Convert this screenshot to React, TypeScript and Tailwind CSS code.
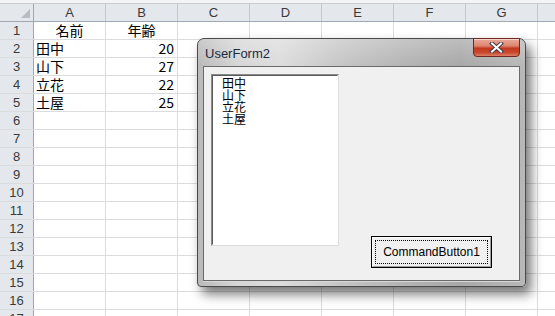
import React from "react";

const COLS = ["A", "B", "C", "D", "E", "F", "G", "H"];
const DATA: Record<number, { a?: string; b?: string; center?: boolean }> = {
  1: { a: "名前", b: "年齢", center: true },
  2: { a: "田中", b: "20" },
  3: { a: "山下", b: "27" },
  4: { a: "立花", b: "22" },
  5: { a: "土屋", b: "25" },
};
const ROWS = Array.from({ length: 17 }, (_, i) => i + 1);
const LIST = ["田中", "山下", "立花", "土屋"];

function HeaderRow() {
  return (
    <div className="flex h-[18px] w-max border-b border-[#9ea7b2] bg-[#e4e7ec]">
      <div className="relative w-[34px] shrink-0 border-r border-[#9ea7b2]">
        <div className="absolute bottom-[3px] right-[3px] h-0 w-0 border-b-[9px] border-l-[9px] border-b-[#b7bcc2] border-l-transparent" />
      </div>
      {COLS.map((c) => (
        <div
          key={c}
          className="flex w-[72px] shrink-0 items-center justify-center border-r border-[#c3c8cf] text-[13px] leading-none text-[#3a3a3a] font-['Liberation_Sans',sans-serif]"
        >
          {c}
        </div>
      ))}
    </div>
  );
}

function Row({ n }: { n: number }) {
  const d = DATA[n];
  return (
    <div className="flex h-[18px] w-max border-b border-[#dadcdd]">
      <div className="flex w-[34px] shrink-0 items-center justify-center border-r border-[#9ea7b2] bg-[#e4e7ec] text-[13px] leading-none text-[#3a3a3a] font-['Liberation_Sans',sans-serif]">
        {n}
      </div>
      {COLS.map((c) => {
        let content: React.ReactNode = null;
        let align = "justify-start pl-[2px]";
        if (d && c === "A") {
          content = d.a;
          align = d.center ? "justify-center" : "justify-start pl-[2px]";
        } else if (d && c === "B") {
          content = d.b;
          align = d.center ? "justify-center" : "justify-end pr-[3px]";
        }
        return (
          <div
            key={c}
            className={`flex w-[72px] shrink-0 items-end border-r border-[#dadcdd] pb-[1px] text-[14px] leading-[15px] text-black font-['Noto_Sans_CJK_JP',sans-serif] ${align}`}
          >
            {content}
          </div>
        );
      })}
    </div>
  );
}

function CloseButton() {
  return (
    <div className="mt-[-1px] flex h-[19px] w-[47px] shrink-0 items-center justify-center rounded-b-[4px] border border-[#6e2a1f] bg-[linear-gradient(to_bottom,#e9aa9a_0%,#dd8571_40%,#c2381f_55%,#c94a31_80%,#dc7e64_100%)] shadow-[inset_0_1px_0_rgba(255,255,255,0.5)]">
      <svg width="15" height="11" viewBox="0 0 15 11">
        <path d="M3 1.5 L12 9.5 M12 1.5 L3 9.5" stroke="#3c3c46" strokeWidth="4" strokeLinecap="square" />
        <path d="M3 1.5 L12 9.5 M12 1.5 L3 9.5" stroke="#ffffff" strokeWidth="2" strokeLinecap="square" />
      </svg>
    </div>
  );
}

function UserForm() {
  return (
    <div className="absolute left-[197px] top-[38px] flex h-[249px] w-[329px] flex-col rounded-t-[7px] rounded-b-[4px] border border-[#4a4a4a] bg-[linear-gradient(to_right,#b9b9b9_0%,#d6d6d6_12%,#dcdcdc_25%,#c4c4c4_45%,#b2b2b2_65%,#a8a8a8_80%,#b8b8b8_100%)] shadow-[5px_7px_12px_rgba(0,0,0,0.55)]">
      <div className="flex h-[27px] shrink-0 justify-between rounded-t-[6px] bg-[linear-gradient(to_bottom,rgba(255,255,255,0.25),rgba(255,255,255,0))] pr-[5px]">
        <div className="flex items-center pl-[7px] pt-[1px] text-[13px] leading-none text-[#1c2b40] font-['Liberation_Sans',sans-serif]">
          UserForm2
        </div>
        <CloseButton />
      </div>
      <div className="mx-[5px] mb-[5px] flex flex-1 items-start border border-[#6a6a6a] bg-[#f0f0f0] p-[7px] shadow-[0_1px_0_#d8d8d8]">
        <div className="h-[172px] w-[128px] shrink-0 border border-[#dcdcdc] border-l-[#8a8a8a] border-t-[#8a8a8a] bg-white">
          <div className="h-full w-full border border-transparent border-l-[#5a5a5a] border-t-[#5a5a5a] pl-[9px] pt-[1px]">
            {LIST.map((t) => (
              <div key={t} className="h-[12px] text-[12px] leading-[12px] text-black font-['Noto_Sans_CJK_JP',sans-serif]">
                {t}
              </div>
            ))}
          </div>
        </div>
        <div className="ml-[32px] mt-auto mb-[5px] h-[32px] w-[121px] shrink-0 border border-black bg-[#f0f0f0]">
          <div className="h-full w-full border border-white border-b-[#a0a0a0] border-r-[#a0a0a0] p-[2px]">
            <div className="flex h-full w-full items-center justify-center border border-dotted border-black text-[12px] leading-none text-black font-['Liberation_Sans',sans-serif]">
              CommandButton1
            </div>
          </div>
        </div>
      </div>
    </div>
  );
}

export default function App() {
  return (
    <div className="relative h-[316px] w-[555px] overflow-hidden bg-white">
      <div className="h-[4px] border-b border-[#c6cbd1] bg-[#f3f4f6]" />
      <HeaderRow />
      {ROWS.map((n) => (
        <Row key={n} n={n} />
      ))}
      <UserForm />
    </div>
  );
}
